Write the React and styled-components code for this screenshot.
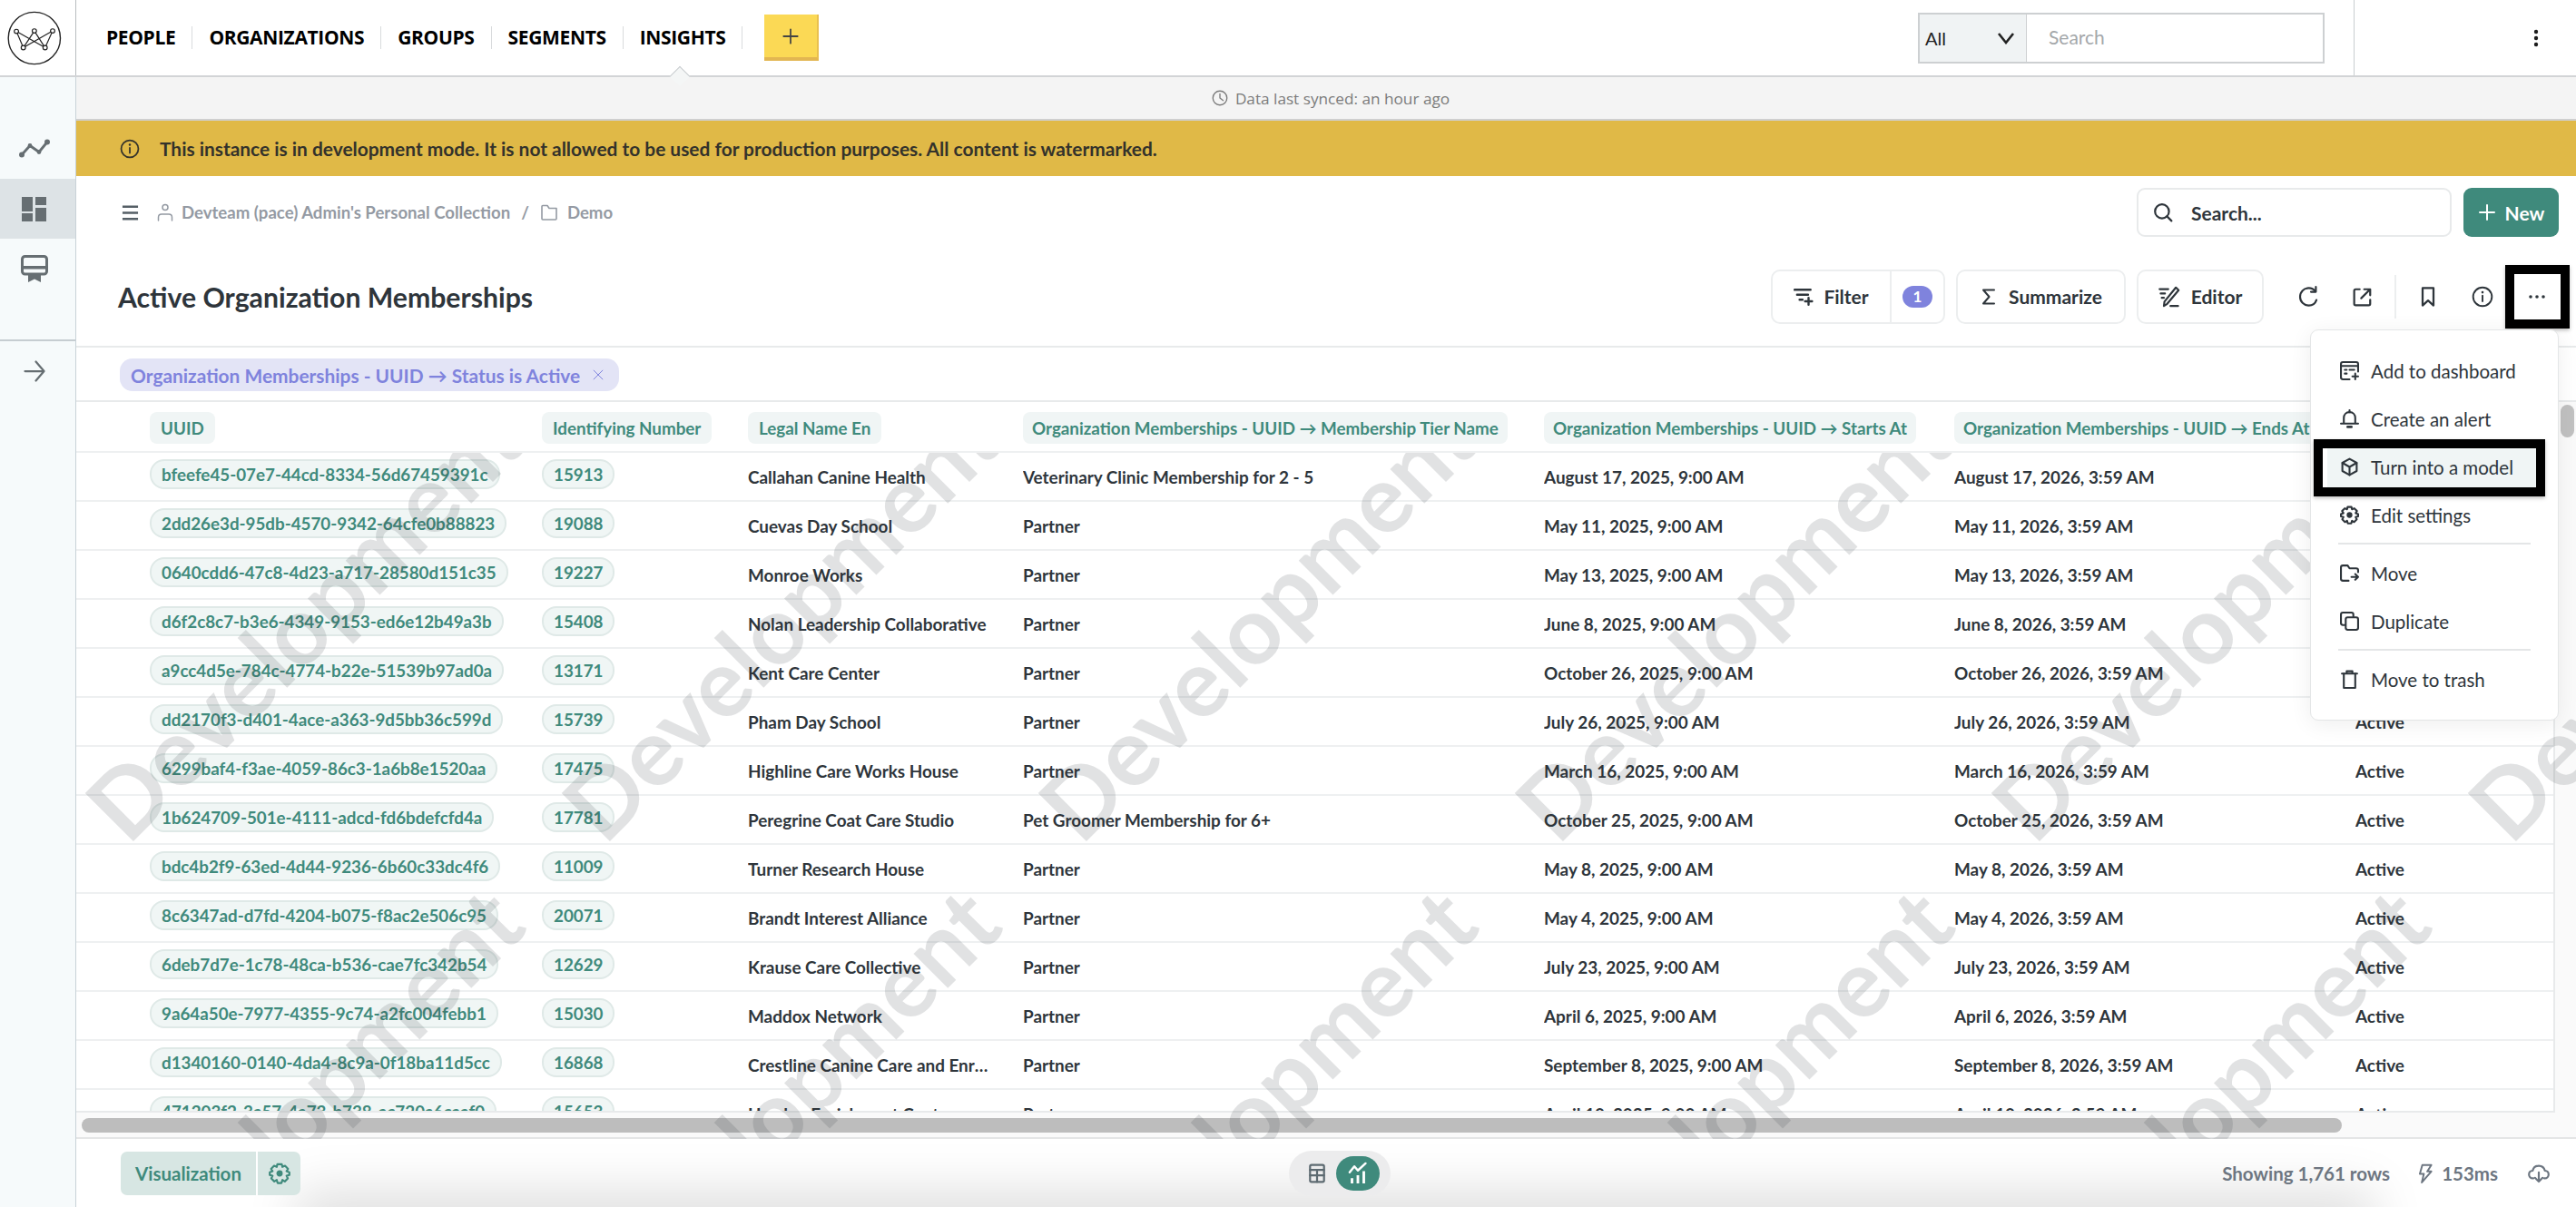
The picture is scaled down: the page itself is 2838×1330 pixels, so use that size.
import React from 'react';
import styled, {createGlobalStyle} from 'styled-components';

const GlobalStyle = createGlobalStyle`
  html, body {
    margin: 0;
    padding: 0;
    background: #fff;
    font-family: Lato, "Liberation Sans", sans-serif;
    color: #2e353b;
  }
  * { box-sizing: border-box; }
`;

const GREEN = '#3f8a7c';
const INK = '#2e353b';

const Shell = styled.div`
  position: relative;
  width: 2838px;
  height: 1330px;
  overflow: hidden;
  display: flex;
  flex-direction: column;
`;

/* top navigation */
const TopBar = styled.header`
  height: 85px;
  display: flex;
  align-items: center;
  border-bottom: 2px solid #d2d4d6;
  flex: none;
`;

const LogoCell = styled.div`
  width: 84px;
  height: 100%;
  border-right: 1px solid #b9bdc0;
  display: flex;
  align-items: center;
  flex: none;
`;

const Nav = styled.nav`
  display: flex;
  align-items: center;
  margin-left: 33px;
`;

const NavItem = styled.a`
  position: relative;
  font-family: "Open Sans", Lato, sans-serif;
  font-weight: 700;
  font-size: 21px;
  letter-spacing: -0.35px;
  line-height: 25px;
  color: #000;
  padding-right: 18px;
  margin-right: 18px;
  border-right: 1px solid #d9dbdd;
  height: 25px;
  text-transform: uppercase;
  white-space: nowrap;
`;

const Notch = styled.span`
  position: absolute;
  left: 50%;
  margin-left: -20px;
  top: 47px;
  width: 16px;
  height: 16px;
  transform: rotate(45deg);
  background: #f4f6f6;
  border-left: 1px solid #c9cdd0;
  border-top: 1px solid #c9cdd0;
`;

const AddButton = styled.button`
  width: 60px;
  height: 51px;
  margin-left: 6px;
  padding: 0;
  background: #fbd955;
  border: none;
  border-bottom: 4px solid #e2b651;
  border-right: 2px solid #e9c04f;
  display: flex;
  align-items: center;
  justify-content: center;
  color: #444;
`;

const GlobalSearch = styled.div`
  margin-left: auto;
  width: 448px;
  height: 56px;
  display: flex;
  border: 2px solid #cdd0d2;
`;

const ScopeSelect = styled.div`
  width: 118px;
  background: #f0f3f4;
  border-right: 1px solid #cdd0d2;
  display: flex;
  align-items: center;
  justify-content: space-between;
  padding: 0 12px 0 6px;
  font-size: 20px;
  color: #222;
`;

const GlobalInput = styled.div`
  flex: 1;
  display: flex;
  align-items: center;
  padding: 0 0 2px 24px;
  font-size: 21px;
  color: #a4a8ab;
`;

const KebabCell = styled.div`
  width: 245px;
  margin-left: 32px;
  height: 100%;
  border-left: 1px solid #c9cdd0;
  display: flex;
  align-items: center;
  justify-content: flex-end;
  padding-right: 41px;
  color: #1d1d1d;
  flex: none;
`;

/* page body */
const Body = styled.div`
  flex: 1;
  min-height: 0;
  display: flex;
`;

const Rail = styled.aside`
  width: 84px;
  flex: none;
  background: #f6fafb;
  border-right: 1px solid #c8d2d8;
  display: flex;
  flex-direction: column;
  padding-top: 45px;
  color: #666e72;
`;

const RailItem = styled.div`
  height: ${p => p.$h}px;
  background: ${p => (p.$active ? '#dde3e6' : 'transparent')};
  display: flex;
  align-items: center;
  justify-content: center;
  padding-right: 8px;
`;

const RailDivider = styled.div`
  height: 2px;
  background: #c6cdd1;
  margin-top: 45px;
`;

const Main = styled.main`
  flex: 1;
  min-width: 0;
  display: flex;
  flex-direction: column;
`;

const SyncBar = styled.div`
  height: 48px;
  flex: none;
  background: #f4f4f4;
  border-bottom: 2px solid #cfcfcf;
  display: flex;
  align-items: center;
  justify-content: center;
  gap: 8px;
  padding-left: 10px;
  font-family: "Open Sans", Lato, sans-serif;
  font-size: 17.2px;
  color: #7b7b7b;
`;

const Banner = styled.div`
  height: 61px;
  flex: none;
  background: #e0b947;
  display: flex;
  align-items: center;
  gap: 22px;
  padding-left: 48px;
  font-weight: 700;
  font-size: 20.9px;
  color: #33322b;
`;

const CrumbRow = styled.div`
  height: 80px;
  flex: none;
  display: flex;
  align-items: center;
  padding: 0 19px 0 50px;
  color: #949aa3;
  font-size: 18.6px;
  font-weight: 700;
`;

const Crumb = styled.span`
  display: inline-flex;
  align-items: center;
  gap: ${p => p.$gap || 9}px;
  margin-left: ${p => p.$ml || 0}px;
`;

const Burger = styled.span`
  color: #555f66;
  display: inline-flex;
`;

const SearchBox = styled.div`
  margin-left: auto;
  width: 347px;
  height: 54px;
  border: 2px solid #e8eaeb;
  border-radius: 9px;
  display: flex;
  align-items: center;
  gap: 20px;
  padding-left: 16px;
  color: ${INK};
  font-size: 21px;
  font-weight: 700;
`;

const NewButton = styled.button`
  margin-left: 13px;
  width: 105px;
  height: 54px;
  border: none;
  border-radius: 9px;
  background: ${GREEN};
  color: #fff;
  display: flex;
  align-items: center;
  justify-content: center;
  gap: 10px;
  font-family: inherit;
  font-size: 21px;
  font-weight: 700;
`;

const TitleRow = styled.div`
  height: 109px;
  flex: none;
  border-bottom: 2px solid #e8eaeb;
  display: flex;
  align-items: center;
  padding: 0 18px 2px 46px;
`;

const Title = styled.h1`
  margin: 0;
  font-size: 30.2px;
  line-height: 40px;
  font-weight: 700;
  color: ${INK};
`;

const Actions = styled.div`
  margin-left: auto;
  display: flex;
  align-items: center;
  gap: 12px;
`;

const ActionButton = styled.button`
  height: 60px;
  width: ${p => p.$w}px;
  background: #fff;
  border: 2px solid #eceeef;
  border-radius: 10px;
  display: flex;
  align-items: center;
  justify-content: center;
  gap: 12px;
  padding: 0;
  font-family: inherit;
  font-size: 21px;
  font-weight: 700;
  color: ${INK};
`;

const FilterGroup = styled.div`
  height: 60px;
  width: 192px;
  display: flex;
  border: 2px solid #eceeef;
  border-radius: 10px;
`;

const FilterLabel = styled.div`
  width: 131px;
  border-right: 2px solid #eceeef;
  display: flex;
  align-items: center;
  justify-content: center;
  gap: 11px;
  font-size: 21px;
  font-weight: 700;
`;

const FilterCount = styled.div`
  flex: 1;
  display: flex;
  align-items: center;
  justify-content: center;
`;

const CountBadge = styled.span`
  width: 33px;
  height: 24px;
  border-radius: 12px;
  background: #7f83dd;
  color: #fff;
  font-size: 17px;
  font-weight: 700;
  display: flex;
  align-items: center;
  justify-content: center;
`;

const IconGroup = styled.div`
  display: flex;
  align-items: center;
  gap: 10px;
  margin-left: 12px;
`;

const IconButton = styled.button`
  position: relative;
  width: 50px;
  height: 50px;
  background: none;
  border: none;
  padding: 0;
  color: ${INK};
  display: flex;
  align-items: center;
  justify-content: center;

  ${p => p.$boxed && `
    &::after {
      content: '';
      position: absolute;
      inset: -10px -11px -10px -10px;
      border: 10px solid #000;
      box-shadow: 0 2px 4px rgba(0,0,0,.25);
    }
  `}
`;

const ActionDivider = styled.span`
  width: 2px;
  height: 48px;
  background: #eceeef;
`;

const FilterRow = styled.div`
  height: 60px;
  flex: none;
  display: flex;
  align-items: center;
  padding: 2px 0 0 48px;
  border-bottom: 2px solid #e8eaeb;
`;

const FilterPill = styled.div`
  height: 36px;
  width: 550px;
  border-radius: 14px;
  background: #e3e4f6;
  color: #7f83dd;
  display: flex;
  align-items: center;
  justify-content: space-between;
  padding: 0 16px 0 12px;
  font-size: 20.9px;
  font-weight: 700;
  white-space: nowrap;
`;

/* table */
const TableFrame = styled.div`
  flex: 1;
  min-height: 0;
  display: flex;
  overflow: hidden;
`;

const Table = styled.div`
  width: 2731px;
  flex: none;
  overflow: hidden;
  border-right: 2px solid #e8eaeb;
  border-bottom: 2px solid #e8eaeb;
`;

const ScrollGutter = styled.div`
  flex: 1;
  background: #fafafa;
`;

const VerticalThumb = styled.div`
  width: 15px;
  height: 36px;
  border-radius: 8px;
  background: #c1c1c1;
  margin: 3px 0 0 6px;
`;

const TRow = styled.div`
  display: grid;
  grid-template-columns: 432px 227px 303px 574px 452px 442px 300px;
  padding-left: 81px;
  height: ${p => p.$h}px;
  align-items: center;
  border-bottom: 2px solid #eef0f1;
  white-space: nowrap;
`;

const HeadPill = styled.span`
  justify-self: start;
  height: 35px;
  display: inline-flex;
  align-items: center;
  padding: 0 ${p => p.$pad || 12}px;
  border-radius: 8px;
  background: #f0f5f5;
  color: ${GREEN};
  font-size: 18.8px;
  font-weight: 700;
  margin-top: 2px;
`;

const ValuePill = styled.span`
  justify-self: start;
  height: 33px;
  display: inline-flex;
  align-items: center;
  padding: 0 11px;
  border: 2px solid #dfe9e7;
  border-radius: 16px;
  background: #f0f6f5;
  color: ${GREEN};
  font-size: 18.8px;
  font-weight: 700;
  margin-bottom: 5px;
`;

const Cell = styled.span`
  font-size: 18.9px;
  font-weight: 700;
  color: ${INK};
  overflow: hidden;
  text-overflow: ellipsis;
  padding-right: ${p => p.$pr || 0}px;
`;

const HScroll = styled.div`
  height: 29px;
  flex: none;
  background: #fafafa;
  border-bottom: 2px solid #e4e5e6;
  padding: 6px 0 0 6px;
`;

const HThumb = styled.div`
  width: 2490px;
  height: 16px;
  border-radius: 8px;
  background: #bdbdbd;
`;

const Footer = styled.footer`
  position: relative;
  flex: none;
  height: 75px;
  overflow: hidden;
  display: grid;
  grid-template-columns: 1287px 112px 1fr;
  align-items: center;
  padding: 0 29px 0 49px;

  &::before {
    content: '';
    position: absolute;
    left: 260px;
    right: 240px;
    bottom: -30px;
    height: 30px;
    box-shadow: 0 0 55px 18px rgba(0, 0, 0, .13);
  }
`;

const VizButton = styled.div`
  position: relative;
  justify-self: start;
  display: flex;
  height: 48px;
  border-radius: 7px;
  overflow: hidden;
  gap: 2px;
  color: ${GREEN};
  font-size: 20.5px;
  font-weight: 700;
`;

const VizPart = styled.div`
  width: ${p => p.$w}px;
  background: #d7e6e3;
  display: flex;
  align-items: center;
  justify-content: center;
`;

const Toggle = styled.div`
  position: relative;
  height: 50px;
  border-radius: 25px;
  background: #ececed;
  display: flex;
  align-items: center;
  padding-left: 20px;
  color: #5d6a71;
`;

const ToggleActive = styled.span`
  width: 48px;
  height: 38px;
  border-radius: 19px;
  background: ${GREEN};
  color: #fff;
  margin-left: 10px;
  display: flex;
  align-items: center;
  justify-content: center;
`;

const FooterInfo = styled.div`
  position: relative;
  display: flex;
  align-items: center;
  justify-content: flex-end;
  color: #6d7681;
  font-size: 20.5px;
  font-weight: 700;
`;

const InfoPart = styled.span`
  display: inline-flex;
  align-items: center;
  gap: 7px;
  margin-left: ${p => p.$ml || 0}px;
`;

/* overlays */
const Watermark = styled.svg`
  position: absolute;
  left: 84px;
  top: 499px;
  width: 2754px;
  height: 756px;
  pointer-events: none;
  z-index: 2;

  text {
    font-family: Lato, sans-serif;
    font-weight: 700;
    font-size: 104px;
    fill: rgba(40, 50, 60, .14);
  }
`;

const Menu = styled.div`
  position: absolute;
  left: 2545px;
  top: 363px;
  width: 274px;
  z-index: 3;
  background: #fff;
  border: 1px solid #e4e6e7;
  border-radius: 9px;
  padding: 18px 14px 18px 18px;
  box-shadow: 0 4px 24px rgba(0, 0, 0, .07);
`;

const MenuItem = styled.div`
  position: relative;
  height: 53px;
  display: flex;
  align-items: center;
  gap: 13px;
  padding-left: 14px;
  font-size: 20.5px;
  font-weight: 400;
  color: ${INK};
  background: ${p => (p.$highlight ? '#f0f5f5' : 'transparent')};
  white-space: nowrap;

  ${p => p.$highlight && `
    &::after {
      content: '';
      position: absolute;
      inset: -4px 0 -6px -15px;
      border: 10px solid #000;
      box-shadow: 0 2px 4px rgba(0,0,0,.25);
    }
  `}
`;

const MenuDivider = styled.div`
  height: 2px;
  margin: 4px 16px 5px 12px;
  background: #e4e6e7;
`;

/* icons */
const Svg = styled.svg`
  flex: none;
  fill: none;
  stroke: currentColor;
  stroke-width: ${p => p.$sw || 2};
  stroke-linecap: round;
  stroke-linejoin: round;
`;

const Icon = ({s = 20, sw, children}) => (
  <Svg width={s} height={s} viewBox="0 0 20 20" $sw={sw}>{children}</Svg>
);

const Logo = () => (
  <svg width="84" height="82" viewBox="0 0 84 82" fill="none" stroke="#222" strokeWidth="1.2">
    <circle cx="38.3" cy="41" r="29" strokeWidth="1.4" />
    <path d="M18.3 33.5L26 51.7M18.3 33.5L50.3 51.7M38.3 33L26 51.7M38.3 33L50.3 51.7M58.7 33L50.3 51.7M58.7 33L26 51.7" />
    {[[18.3, 33.5], [38.3, 33], [58.7, 33], [26, 51.7], [50.3, 51.7]].map(([cx, cy]) => (
      <circle key={cx} cx={cx} cy={cy} r="2.4" fill="#fff" />
    ))}
  </svg>
);

const TrendIcon = () => (
  <svg width="34" height="21" viewBox="0 0 34 21" fill="none" stroke="currentColor" strokeWidth="2.8" strokeLinejoin="round">
    <path d="M3 17.5L12 7.5L22 14.5L31 3.5" />
    <circle cx="3" cy="17.5" r="1.6" fill="currentColor" />
    <circle cx="12" cy="7.5" r="1" fill="currentColor" />
    <circle cx="22" cy="14.5" r="1" fill="currentColor" />
    <circle cx="31" cy="3.5" r="1.6" fill="currentColor" />
  </svg>
);

const BoardIcon = () => (
  <svg width="27" height="27" viewBox="0 0 27 27" fill="currentColor">
    <rect x="0" y="0" width="12" height="16" />
    <rect x="15" y="0" width="12" height="9" />
    <rect x="0" y="18" width="12" height="9" />
    <rect x="15" y="12" width="12" height="15" />
  </svg>
);

const ModelIcon = () => (
  <svg width="30" height="30" viewBox="0 0 30 30" fill="none">
    <rect x="1.5" y="1.5" width="27" height="19.5" rx="3" stroke="currentColor" strokeWidth="3" />
    <rect x="2" y="12" width="26" height="3.5" fill="currentColor" />
    <path d="M8 22H22V30L15 26.5L8 30Z" fill="currentColor" />
  </svg>
);

const InfoIcon = ({s = 22}) => (
  <Icon s={s} sw={1.6}>
    <circle cx="10" cy="10" r="8.6" />
    <path d="M10 9V14.2" />
    <path d="M10 5.8V5.9" strokeWidth="2.2" />
  </Icon>
);

const FilterIcon = () => (
  <Icon s={22} sw={2.2}>
    <path d="M1 3H17M3.5 8H14.5M6 13H9" />
    <path d="M15 11V18M11.5 14.5H18.5" />
  </Icon>
);

const SigmaIcon = () => (
  <Icon s={20}>
    <path d="M16 2.5H4L10.5 10L4 17.5H16" />
  </Icon>
);

const PenIcon = () => (
  <Icon s={24} sw={1.8}>
    <path d="M1 3H9M2 7H6M3 11H5" />
    <path d="M16 1.5L18.5 4L8 16.5L5 18.5L5.5 14.5Z" />
    <path d="M11 18.5H18" />
  </Icon>
);

const CaretIcon = () => (
  <svg width="20" height="14" viewBox="0 0 20 14" fill="none" stroke="#222" strokeWidth="2.6">
    <path d="M2 2L10 12L18 2" />
  </svg>
);

const DashboardAddIcon = () => (
  <Icon s={21} sw={2}>
    <path d="M10 19H3C2 19 1 18 1 17V3C1 2 2 1 3 1H17C18 1 19 2 19 3V11" />
    <path d="M1 5H19M5 9H7M10 9H15M5 13H7" />
    <path d="M16 13V19M13 16H19" />
  </Icon>
);

const BellIcon = () => (
  <Icon s={21} sw={2}>
    <path d="M4 14V9C4 5.5 6.5 3 10 3C13.5 3 16 5.5 16 9V14" />
    <path d="M1 15H19" />
    <path d="M10 1V3" />
    <path d="M8 18.5H12" strokeWidth="2.6" />
  </Icon>
);

const CubeIcon = () => (
  <Icon s={21} sw={2}>
    <path d="M10 1.5L17.5 5.7V14.3L10 18.5L2.5 14.3V5.7Z" />
    <path d="M2.5 5.7L10 10L17.5 5.7M10 10V18.5" />
  </Icon>
);

const GearIcon = ({s = 21, sw = 2}) => (
  <Icon s={s} sw={sw}>
    <path d="M8 1.5H12L12.6 4L15 3L17.8 5.8L16.4 8L19 9V11.5L16.4 12.2L17.6 14.6L14.8 17.4L12.6 16L11.8 18.8H8.2L7.4 16L5.2 17.4L2.4 14.6L3.6 12.2L1 11.5V9L3.6 8L2.2 5.8L5 3L7.4 4Z" />
    <circle cx="10" cy="10" r="2" fill="currentColor" />
  </Icon>
);

const MoveIcon = () => (
  <Icon s={21} sw={2}>
    <path d="M9 18H3C2 18 1 17 1 16V4C1 3 2 2 3 2H8L10 5H17C18 5 19 6 19 7V9" />
    <path d="M12 14H19M16 11L19 14L16 17" />
  </Icon>
);

const CopyIcon = () => (
  <Icon s={21} sw={2}>
    <path d="M5 14H3C2 14 1 13 1 12V3C1 2 2 1 3 1H12C13 1 14 2 14 3V5" />
    <rect x="6" y="6" width="13" height="13" rx="2" />
  </Icon>
);

const TrashIcon = () => (
  <Icon s={21} sw={2}>
    <path d="M2 4H18M7 4V1.5H13V4" />
    <path d="M4 4V19H16V4" />
  </Icon>
);

const RefreshIcon = () => (
  <Icon s={24} sw={1.8}>
    <path d="M16.5 5C15 3 13 2 10.5 2C6 2 2.5 5.6 2.5 10C2.5 14.5 6 18 10.5 18C14 18 16.5 16 17.5 13" />
    <path d="M17 1V5.5H12.5" />
  </Icon>
);

const ExternalIcon = () => (
  <Icon s={22} sw={2}>
    <path d="M7 2.5H3C2 2.5 1.5 3 1.5 4V17C1.5 18 2 18.5 3 18.5H16C17 18.5 17.5 18 17.5 17V13" />
    <path d="M8.5 11.5L17 3M11.5 2.5H17.5V8.5" />
  </Icon>
);

const BookmarkIcon = () => (
  <Icon s={24} sw={1.9}>
    <path d="M5 2H15V18L10 13.5L5 18Z" />
  </Icon>
);

const DownloadCloudIcon = () => (
  <Icon s={24} sw={1.8}>
    <path d="M5 14.5H4.5C2.5 14.5 1 13 1 11C1 9 2.5 7.6 4.4 7.5C5 4.6 7.2 3 10 3C13 3 15 5 15.6 7.5C17.5 7.6 19 9 19 11C19 13 17.5 14.5 15.5 14.5H15" />
    <path d="M10 9V17.5M6.5 14L10 17.5L13.5 14" />
  </Icon>
);

const BoltIcon = () => (
  <Icon s={22} sw={1.8}>
    <path d="M7 1.5H16L12 8H16L6.5 19L8.5 10.5H4.5Z" />
  </Icon>
);

const TableIcon = () => (
  <Icon s={22} sw={2}>
    <rect x="3" y="1.5" width="14" height="17" rx="1.5" />
    <path d="M3 6.5H17M3 12H17M10 6.5V18.5" />
  </Icon>
);

const ChartIcon = () => (
  <Icon s={26} sw={1.9}>
    <path d="M3 9L7 4L10 7.5L16.5 1.5" />
    <path d="M5 18.5V14M10 18.5V11.5M15 18.5V8" strokeWidth="2.2" strokeLinecap="butt" />
  </Icon>
);

const tierA = 'Veterinary Clinic Membership for 2 - 5';
const tierB = 'Pet Groomer Membership for 6+';

const rows = [
  ['bfeefe45-07e7-44cd-8334-56d67459391c', '15913', 'Callahan Canine Health', tierA, 'August 17'],
  ['2dd26e3d-95db-4570-9342-64cfe0b88823', '19088', 'Cuevas Day School', 'Partner', 'May 11'],
  ['0640cdd6-47c8-4d23-a717-28580d151c35', '19227', 'Monroe Works', 'Partner', 'May 13'],
  ['d6f2c8c7-b3e6-4349-9153-ed6e12b49a3b', '15408', 'Nolan Leadership Collaborative', 'Partner', 'June 8'],
  ['a9cc4d5e-784c-4774-b22e-51539b97ad0a', '13171', 'Kent Care Center', 'Partner', 'October 26'],
  ['dd2170f3-d401-4ace-a363-9d5bb36c599d', '15739', 'Pham Day School', 'Partner', 'July 26'],
  ['6299baf4-f3ae-4059-86c3-1a6b8e1520aa', '17475', 'Highline Care Works House', 'Partner', 'March 16'],
  ['1b624709-501e-4111-adcd-fd6bdefcfd4a', '17781', 'Peregrine Coat Care Studio', tierB, 'October 25'],
  ['bdc4b2f9-63ed-4d44-9236-6b60c33dc4f6', '11009', 'Turner Research House', 'Partner', 'May 8'],
  ['8c6347ad-d7fd-4204-b075-f8ac2e506c95', '20071', 'Brandt Interest Alliance', 'Partner', 'May 4'],
  ['6deb7d7e-1c78-48ca-b536-cae7fc342b54', '12629', 'Krause Care Collective', 'Partner', 'July 23'],
  ['9a64a50e-7977-4355-9c74-a2fc004febb1', '15030', 'Maddox Network', 'Partner', 'April 6'],
  ['d1340160-0140-4da4-8c9a-0f18ba11d5cc', '16868', 'Crestline Canine Care and Enrichment', 'Partner', 'September 8'],
  ['471203f2-3a57-4a73-b738-ac720a6caaf0', '15653', 'Hayden Enrichment Center', 'Partner', 'April 10'],
];

const PREFIX = 'Organization Memberships - UUID →';
const navItems = ['People', 'Organizations', 'Groups', 'Segments', 'Insights'];
const watermarks = [0, 1, 2, 3, 4, 5].flatMap(i => [
  [57 + i * 525, 434],
  [57 + i * 525, 968],
]);

const App = () => (
  <Shell>
    <GlobalStyle />

    <TopBar>
      <LogoCell><Logo /></LogoCell>
      <Nav>
        {navItems.map(item => (
          <NavItem key={item}>
            {item}
            {item === 'Insights' && <Notch />}
          </NavItem>
        ))}
      </Nav>
      <AddButton>
        <Icon s={22} sw={1.6}><path d="M10 3V17M3 10H17" /></Icon>
      </AddButton>
      <GlobalSearch>
        <ScopeSelect>All<CaretIcon /></ScopeSelect>
        <GlobalInput>Search</GlobalInput>
      </GlobalSearch>
      <KebabCell>
        <svg width="6" height="20" viewBox="0 0 6 20" fill="currentColor">
          <circle cx="3" cy="3" r="2.2" />
          <circle cx="3" cy="10" r="2.2" />
          <circle cx="3" cy="17" r="2.2" />
        </svg>
      </KebabCell>
    </TopBar>

    <Body>
      <Rail>
        <RailItem $h={67}><TrendIcon /></RailItem>
        <RailItem $h={66} $active><BoardIcon /></RailItem>
        <RailItem $h={66}><ModelIcon /></RailItem>
        <RailDivider />
        <RailItem $h={66}>
          <Icon s={30} sw={1.5}><path d="M3 10H17M11 3L17 10L11 17" /></Icon>
        </RailItem>
      </Rail>

      <Main>
        <SyncBar>
          <Icon s={18} sw={1.5}>
            <circle cx="10" cy="10" r="8.6" />
            <path d="M10 5V10L14 13" />
          </Icon>
          Data last synced: an hour ago
        </SyncBar>

        <Banner>
          <InfoIcon s={22} />
          This instance is in development mode. It is not allowed to be used for production purposes. All content is watermarked.
        </Banner>

        <CrumbRow>
          <Burger>
            <Icon s={19} sw={2.6}><path d="M1 3H19M1 10H19M1 17H19" strokeLinecap="butt" /></Icon>
          </Burger>
          <Crumb $ml={19} $gap={8}>
            <Icon s={20} sw={1.5}>
              <circle cx="10" cy="4.5" r="3" />
              <path d="M2.5 19V15.5C2.5 13.5 4 12 6 12H14C16 12 17.5 13.5 17.5 15.5V19" />
            </Icon>
            Devteam (pace) Admin's Personal Collection
          </Crumb>
          <Crumb $ml={12}>/</Crumb>
          <Crumb $ml={12} $gap={10}>
            <Icon s={20} sw={1.6}>
              <path d="M2 17V3.5C2 3 2.5 2.5 3 2.5H8L10 5.5H18V17C18 17.5 17.5 18 17 18H3C2.5 18 2 17.5 2 17Z" />
            </Icon>
            Demo
          </Crumb>
          <SearchBox>
            <Icon s={22} sw={2}>
              <circle cx="9" cy="9" r="7" />
              <path d="M14 14L18.5 18.5" />
            </Icon>
            Search...
          </SearchBox>
          <NewButton>
            <Icon s={20} sw={2}><path d="M10 2V18M2 10H18" /></Icon>
            New
          </NewButton>
        </CrumbRow>

        <TitleRow>
          <Title>Active Organization Memberships</Title>
          <Actions>
            <FilterGroup>
              <FilterLabel><FilterIcon />Filter</FilterLabel>
              <FilterCount><CountBadge>1</CountBadge></FilterCount>
            </FilterGroup>
            <ActionButton $w={187}><SigmaIcon />Summarize</ActionButton>
            <ActionButton $w={140}><PenIcon />Editor</ActionButton>
            <IconGroup>
              <IconButton><RefreshIcon /></IconButton>
              <IconButton><ExternalIcon /></IconButton>
              <ActionDivider />
              <IconButton><BookmarkIcon /></IconButton>
              <IconButton><InfoIcon s={24} /></IconButton>
              <IconButton $boxed>
                <svg width="20" height="6" viewBox="0 0 20 6" fill="currentColor">
                  <circle cx="3" cy="3" r="1.8" />
                  <circle cx="10" cy="3" r="1.8" />
                  <circle cx="17" cy="3" r="1.8" />
                </svg>
              </IconButton>
            </IconGroup>
          </Actions>
        </TitleRow>

        <FilterRow>
          <FilterPill>
            {PREFIX} Status is Active
            <Icon s={14} sw={1.4}><path d="M3 3L17 17M17 3L3 17" /></Icon>
          </FilterPill>
        </FilterRow>

        <TableFrame>
          <Table>
            <TRow $h={56}>
              <HeadPill>UUID</HeadPill>
              <HeadPill>Identifying Number</HeadPill>
              <HeadPill>Legal Name En</HeadPill>
              <HeadPill $pad={10}>{PREFIX} Membership Tier Name</HeadPill>
              <HeadPill $pad={10}>{PREFIX} Starts At</HeadPill>
              <HeadPill $pad={10}>{PREFIX} Ends At</HeadPill>
              <HeadPill $pad={10}>{PREFIX} Status</HeadPill>
            </TRow>
            {rows.map(([uuid, num, name, tier, date]) => (
              <TRow key={uuid} $h={54}>
                <ValuePill>{uuid}</ValuePill>
                <ValuePill>{num}</ValuePill>
                <Cell $pr={36}>{name}</Cell>
                <Cell>{tier}</Cell>
                <Cell>{date}, 2025, 9:00 AM</Cell>
                <Cell>{date}, 2026, 3:59 AM</Cell>
                <Cell>Active</Cell>
              </TRow>
            ))}
          </Table>
          <ScrollGutter><VerticalThumb /></ScrollGutter>
        </TableFrame>

        <HScroll><HThumb /></HScroll>

        <Footer>
          <VizButton>
            <VizPart $w={149}>Visualization</VizPart>
            <VizPart $w={47}><GearIcon s={24} sw={1.8} /></VizPart>
          </VizButton>
          <Toggle>
            <TableIcon />
            <ToggleActive><ChartIcon /></ToggleActive>
          </Toggle>
          <FooterInfo>
            Showing 1,761 rows
            <InfoPart $ml={28}><BoltIcon />153ms</InfoPart>
            <InfoPart $ml={33}><DownloadCloudIcon /></InfoPart>
          </FooterInfo>
        </Footer>
      </Main>
    </Body>

    <Watermark viewBox="0 0 2754 756">
      {watermarks.map(([x, y]) => (
        <text key={`${x}-${y}`} x={x} y={y} transform={`rotate(-45 ${x} ${y})`}>Development</text>
      ))}
    </Watermark>

    <Menu>
      <MenuItem><DashboardAddIcon />Add to dashboard</MenuItem>
      <MenuItem><BellIcon />Create an alert</MenuItem>
      <MenuItem $highlight><CubeIcon />Turn into a model</MenuItem>
      <MenuItem><GearIcon />Edit settings</MenuItem>
      <MenuDivider />
      <MenuItem><MoveIcon />Move</MenuItem>
      <MenuItem><CopyIcon />Duplicate</MenuItem>
      <MenuDivider />
      <MenuItem><TrashIcon />Move to trash</MenuItem>
    </Menu>
  </Shell>
);

export default App;
